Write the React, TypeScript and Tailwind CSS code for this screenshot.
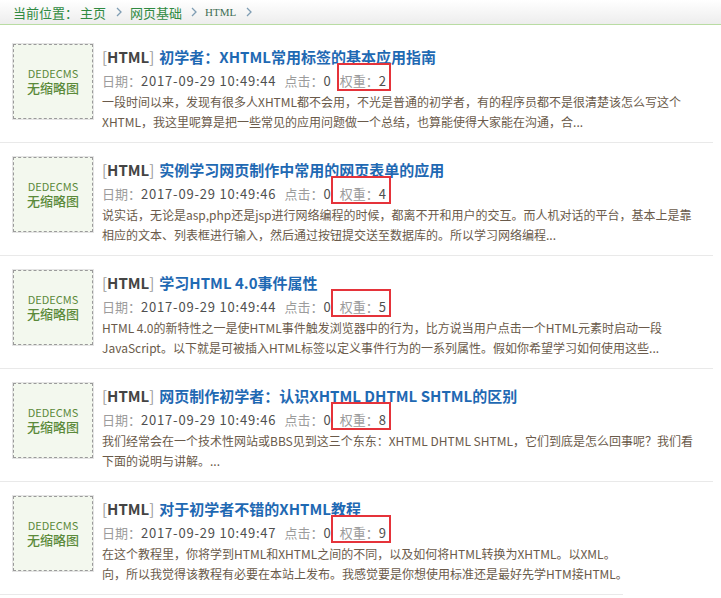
import React from 'react';

type Article = {
  title: string;
  date: string;
  hits: number;
  weight: number;
  lines: [string, string];
  boxShift: boolean;
};

const articles: Article[] = [
  {
    title: '初学者：XHTML常用标签的基本应用指南',
    date: '2017-09-29 10:49:44',
    hits: 0,
    weight: 2,
    lines: [
      '一段时间以来，发现有很多人XHTML都不会用，不光是普通的初学者，有的程序员都不是很清楚该怎么写这个',
      'XHTML，我这里呢算是把一些常见的应用问题做一个总结，也算能使得大家能在沟通，合...',
    ],
    boxShift: false,
  },
  {
    title: '实例学习网页制作中常用的网页表单的应用',
    date: '2017-09-29 10:49:46',
    hits: 0,
    weight: 4,
    lines: [
      '说实话，无论是asp,php还是jsp进行网络编程的时候，都离不开和用户的交互。而人机对话的平台，基本上是靠',
      '相应的文本、列表框进行输入，然后通过按钮提交送至数据库的。所以学习网络编程...',
    ],
    boxShift: true,
  },
  {
    title: '学习HTML 4.0事件属性',
    date: '2017-09-29 10:49:44',
    hits: 0,
    weight: 5,
    lines: [
      'HTML 4.0的新特性之一是使HTML事件触发浏览器中的行为，比方说当用户点击一个HTML元素时启动一段',
      'JavaScript。以下就是可被插入HTML标签以定义事件行为的一系列属性。假如你希望学习如何使用这些...',
    ],
    boxShift: true,
  },
  {
    title: '网页制作初学者：认识XHTML DHTML SHTML的区别',
    date: '2017-09-29 10:49:46',
    hits: 0,
    weight: 8,
    lines: [
      '我们经常会在一个技术性网站或BBS见到这三个东东：XHTML DHTML SHTML，它们到底是怎么回事呢？我们看',
      '下面的说明与讲解。...',
    ],
    boxShift: true,
  },
  {
    title: '对于初学者不错的XHTML教程',
    date: '2017-09-29 10:49:47',
    hits: 0,
    weight: 9,
    lines: [
      '在这个教程里，你将学到HTML和XHTML之间的不同，以及如何将HTML转换为XHTML。以XML。',
      '向，所以我觉得该教程有必要在本站上发布。我感觉要是你想使用标准还是最好先学HTM接HTML。',
    ],
    boxShift: true,
  },
];

const Chevron = () => (
  <svg width="6" height="10" viewBox="0 0 6 10" className="shrink-0">
    <polyline points="1,1 5,5 1,9" fill="none" stroke="#7f9db3" strokeWidth="1.3" />
  </svg>
);

const Thumb = () => (
  <div className="w-[82px] h-[77px] shrink-0 border border-[#e4e4e4]">
    <div className="h-full w-full border border-dashed border-[#9a9a9a] bg-[#f3f8ee] flex flex-col items-center justify-center text-[#5b8a3a]">
      <span className="text-[11px] leading-[13px]">DEDECMS</span>
      <span className="text-[13px] leading-[16px] font-medium">无缩略图</span>
    </div>
  </div>
);

const Item = ({ a, last }: { a: Article; last: boolean }) => (
  <div className="w-[713px]">
    <div className="h-[112px] flex pt-[13px] pl-[12px]">
      <Thumb />
      <div className="ml-[8px] pt-[3px] flex flex-col">
        <div className="h-[22px] leading-[22px] text-[15px] font-bold whitespace-nowrap">
          <span className="text-[#9a9a9a] font-normal">[</span>
          <span className="text-[#444]">HTML</span>
          <span className="text-[#9a9a9a] font-normal">]</span>
          <span className="ml-[5px] text-[#1f69b3]">{a.title}</span>
        </div>
        <div className="h-[24px] leading-[25px] text-[13px] whitespace-nowrap flex">
          <span className="text-[#9c9c9c]">日期：</span>
          <span className="text-[#4f4f4f] tracking-[0.8px]">{a.date}</span>
          <span className="ml-[8px] text-[#9c9c9c]">点击：</span>
          <span className="text-[#4f4f4f]">{a.hits}</span>
          <span className="relative ml-[9px]">
            <span className="text-[#9c9c9c]">权重：</span>
            <span className="text-[#4f4f4f]">{a.weight}</span>
            <span
              className={`absolute top-[-5px] bottom-[1px] right-[-5px] border-2 border-[#e5333a] ${
                a.boxShift ? 'left-[-9px]' : 'left-[-3px]'
              }`}
            />
          </span>
        </div>
        <div className="text-[12px] leading-[20px] text-[#6a5a4a] whitespace-nowrap">
          <div>{a.lines[0]}</div>
          <div>{a.lines[1]}</div>
        </div>
      </div>
    </div>
    <div className={`h-px bg-[#e9e9e9] ${last ? 'w-[623px]' : 'w-[713px]'}`} />
  </div>
);

export default function App() {
  return (
    <div className="w-[721px] h-[598px] overflow-hidden bg-white font-['Noto_Sans_CJK_SC',sans-serif]">
      <div className="h-[25px] border-b border-[#b9dca3] bg-gradient-to-b from-white to-[#ededed] flex items-center pl-[13px] text-[13px] text-[#2f8a41] leading-none">
        <span>当前位置：</span>
        <span className="ml-[2px]">主页</span>
        <span className="ml-[10px] mr-[8px]"><Chevron /></span>
        <span>网页基础</span>
        <span className="ml-[9px] mr-[8px]"><Chevron /></span>
        <span className="font-['Liberation_Serif',serif] text-[11px] text-[#3e6d52]">HTML</span>
        <span className="ml-[10px]"><Chevron /></span>
      </div>
      <div className="pt-[5px]">
        {articles.map((a, i) => (
          <Item key={i} a={a} last={i === articles.length - 1} />
        ))}
      </div>
    </div>
  );
}
